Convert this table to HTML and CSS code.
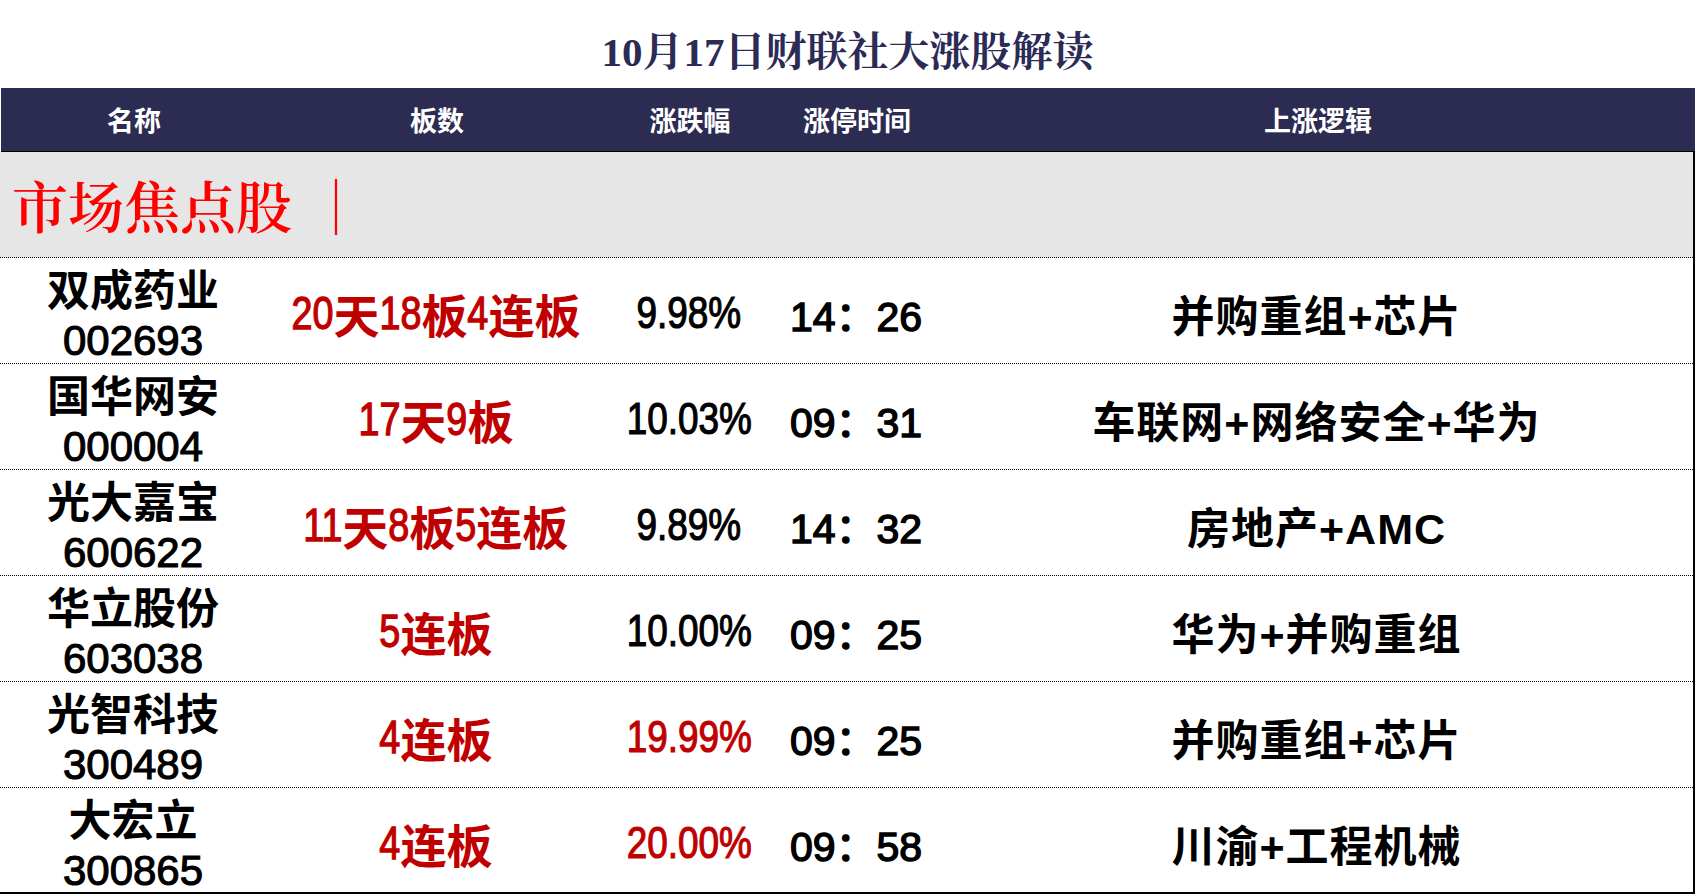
FILE: index.html
```html
<!DOCTYPE html>
<html lang="zh-CN">
<head>
<meta charset="utf-8">
<title>10月17日财联社大涨股解读</title>
<link rel="stylesheet" href="styles.css">
</head>
<body>
<div class="page">
  <div class="title">10月17日财联社大涨股解读</div>
  <div class="table">
    <div class="thead">
      <div class="th">名称</div>
      <div class="th">板数</div>
      <div class="th">涨跌幅</div>
      <div class="th">涨停时间</div>
      <div class="th">上涨逻辑</div>
    </div>
    <div class="tbody">
      <div class="section"><span>市场焦点股</span><span class="bar">｜</span></div>
      <div class="row">
        <div class="cell name"><span class="cn">双成药业</span><span class="code">002693</span></div>
        <div class="cell board red"><span class="n n2">20</span>天<span class="n n2">18</span>板<span class="n n1">4</span>连板</div>
        <div class="cell pct"><span class="nw">9.98%</span></div>
        <div class="cell time">14：26</div>
        <div class="cell logic">并购重组+芯片</div>
      </div>
      <div class="row">
        <div class="cell name"><span class="cn">国华网安</span><span class="code">000004</span></div>
        <div class="cell board red"><span class="n n2">17</span>天<span class="n n1">9</span>板</div>
        <div class="cell pct"><span class="nw">10.03%</span></div>
        <div class="cell time">09：31</div>
        <div class="cell logic">车联网+网络安全+华为</div>
      </div>
      <div class="row">
        <div class="cell name"><span class="cn">光大嘉宝</span><span class="code">600622</span></div>
        <div class="cell board red"><span class="n n2">11</span>天<span class="n n1">8</span>板<span class="n n1">5</span>连板</div>
        <div class="cell pct"><span class="nw">9.89%</span></div>
        <div class="cell time">14：32</div>
        <div class="cell logic">房地产+AMC</div>
      </div>
      <div class="row">
        <div class="cell name"><span class="cn">华立股份</span><span class="code">603038</span></div>
        <div class="cell board red"><span class="n n1">5</span>连板</div>
        <div class="cell pct"><span class="nw">10.00%</span></div>
        <div class="cell time">09：25</div>
        <div class="cell logic">华为+并购重组</div>
      </div>
      <div class="row">
        <div class="cell name"><span class="cn">光智科技</span><span class="code">300489</span></div>
        <div class="cell board red"><span class="n n1">4</span>连板</div>
        <div class="cell pct red"><span class="nw">19.99%</span></div>
        <div class="cell time">09：25</div>
        <div class="cell logic">并购重组+芯片</div>
      </div>
      <div class="row last">
        <div class="cell name"><span class="cn">大宏立</span><span class="code">300865</span></div>
        <div class="cell board red"><span class="n n1">4</span>连板</div>
        <div class="cell pct red"><span class="nw">20.00%</span></div>
        <div class="cell time">09：58</div>
        <div class="cell logic">川渝+工程机械</div>
      </div>
    </div>
  </div>
</div>
</body>
</html>
```

FILE: styles.css
```css
* {
  box-sizing: border-box;
}

html, body {
  margin: 0;
  padding: 0;
  background: #ffffff;
}

.page {
  width: 1695px;
  height: 894px;
  overflow: hidden;
}

.title {
  height: 88px;
  padding-top: 8px;
  display: flex;
  align-items: center;
  justify-content: center;
  font-family: "Liberation Serif", "Noto Serif CJK SC", "Noto Sans CJK SC", serif;
  font-weight: 700;
  font-size: 41px;
  color: #2b2b55;
}

.table {
  display: flex;
  flex-direction: column;
}

.thead {
  display: grid;
  grid-template-columns: 266px 340px 166px 168px 1fr;
  height: 64px;
  background: #2c2b52;
  border-bottom: 1px solid #000000;
  margin-left: 1px;
}

.th {
  display: flex;
  align-items: center;
  justify-content: center;
  color: #ffffff;
  font-family: "Noto Sans CJK SC", sans-serif;
  font-weight: 700;
  font-size: 27px;
}

.tbody {
  border-right: 2px solid #000000;
}

.section {
  height: 106px;
  background: #e6e6e6;
  border-bottom: 1px dotted #000000;
  display: flex;
  align-items: center;
  padding-left: 12px;
  padding-bottom: 2px;
  color: #ff0000;
  font-family: "Noto Serif CJK SC", "Liberation Serif", "Noto Sans CJK SC", serif;
  font-size: 56px;
  font-weight: 600;
}

.section .bar {
  margin-left: 16px;
  font-weight: 900;
}

.row {
  display: grid;
  grid-template-columns: 266px 340px 166px 168px 1fr;
  height: 106px;
  border-bottom: 1px dotted #000000;
}

.row.last {
  border-bottom: 2px solid #000000;
}

.cell {
  display: flex;
  align-items: center;
  justify-content: center;
  font-family: "Liberation Sans", "Noto Sans CJK SC", sans-serif;
  font-weight: 500;
  font-size: 42px;
  color: #000000;
  white-space: nowrap;
}

.cell.red {
  color: #c00000;
}

.cell.name {
  flex-direction: column;
  line-height: 54px;
  padding-top: 2px;
}

.name .cn {
  font-family: "Noto Sans CJK SC", sans-serif;
  font-weight: 700;
  font-size: 43px;
}

.name .code {
  font-weight: 400;
  -webkit-text-stroke: 1.1px #000000;
}

.cell.board {
  font-family: "Noto Sans CJK SC", sans-serif;
  font-size: 46px;
  font-weight: 700;
}

.board .n {
  display: inline-block;
  font-family: "Liberation Sans", sans-serif;
  font-weight: 400;
  -webkit-text-stroke: 1.3px #c00000;
  transform: scaleX(0.82);
  transform-origin: center;
}

.board .n1 {
  margin: 0 -0.05em;
}

.board .n2 {
  margin: 0 -0.1em;
}

.cell.pct {
  font-size: 45px;
  font-weight: 400;
}

.pct .nw {
  display: inline-block;
  transform: scaleX(0.82);
  transform-origin: center;
  -webkit-text-stroke: 1.2px currentColor;
}

.cell.time {
  font-weight: 400;
  font-size: 41px;
  -webkit-text-stroke: 1.4px #000000;
}

.cell.logic {
  font-weight: 700;
  font-size: 43px;
  letter-spacing: 1px;
}
```
